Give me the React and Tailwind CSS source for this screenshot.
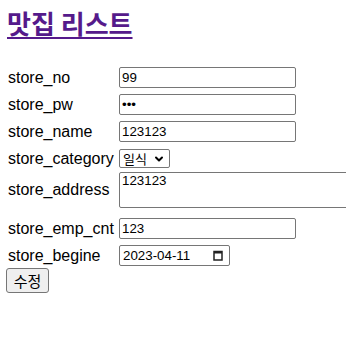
import { ChevronDown } from "lucide-react";

const Field = ({ label, value, type = "text", mt = "mt-[2px]" }) => (
  <div className={`flex items-center h-[25px] ${mt}`}>
    <label className="w-[119px] shrink-0 pl-2 text-[16px] leading-none">{label}</label>
    <input
      type={type}
      defaultValue={value}
      className="w-[177px] h-[21px] shrink-0 border border-[#767676] rounded-[2px] px-[2px] text-[13.33px] font-['Liberation_Sans',sans-serif] text-black outline-none"
    />
  </div>
);

export default function App() {
  return (
    <div className="min-h-screen bg-white text-black font-['Liberation_Sans','Noto_Sans_CJK_KR',sans-serif]">
      <div className="h-[65px] pt-[6px] pl-[7px]">
        <h1 className="text-[26px] font-bold leading-[34px] font-['Noto_Sans_CJK_KR',sans-serif]">
          <a href="#" className="text-[#551a8b] underline decoration-2 underline-offset-[3px]">
            맛집 리스트
          </a>
        </h1>
      </div>

      <form className="flex flex-col">
        <Field label="store_no" value="99" mt="mt-0" />
        <Field label="store_pw" value="123" type="password" />
        <Field label="store_name" value="123123" />

        <div className="flex items-center h-[25px] mt-[2px]">
          <label className="w-[119px] shrink-0 pl-2 text-[16px] leading-none">store_category</label>
          <div className="relative w-[51px] h-[19px] shrink-0 border border-[#767676] rounded-[2px] flex items-center pl-[3px]">
            <span className="text-[13px] leading-none font-['Noto_Sans_CJK_KR',sans-serif]">일식</span>
            <ChevronDown size={12} strokeWidth={4} className="absolute right-[4px] top-[3px]" />
          </div>
        </div>

        <div className="flex items-center h-[36px] mt-[1px]">
          <label className="w-[119px] shrink-0 pl-2 text-[16px] leading-none">store_address</label>
          <textarea
            defaultValue="123123"
            className="w-[240px] h-[36px] shrink-0 border border-[#767676] rounded-[2px] px-[2px] py-0 text-[13.33px] leading-[16px] resize-none outline-none font-['Liberation_Sans',sans-serif]"
          />
        </div>

        <Field label="store_emp_cnt" value="123" mt="mt-[8px]" />

        <div className="flex items-center h-[25px] mt-[2px]">
          <label className="w-[119px] shrink-0 pl-2 text-[16px] leading-none">store_begine</label>
          <div className="w-[111px] h-[21px] shrink-0 border border-[#767676] rounded-[2px] flex items-center justify-between pl-[3px] pr-[6px]">
            <span className="text-[13.33px] leading-none">2023-04-11</span>
            <svg width="10" height="11" viewBox="0 0 10 11">
              <rect x="1" y="1.5" width="8" height="8.5" fill="none" stroke="#222" strokeWidth="1.5" />
              <rect x="1" y="1" width="8" height="2.5" fill="#222" />
            </svg>
          </div>
        </div>
      </form>

      <div className="pl-[6px]">
        <button className="w-[43px] h-[25px] bg-[#efefef] border border-[#767676] rounded-[3px] text-[15px] leading-none font-['Noto_Sans_CJK_KR',sans-serif]">
          수정
        </button>
      </div>
    </div>
  );
}
